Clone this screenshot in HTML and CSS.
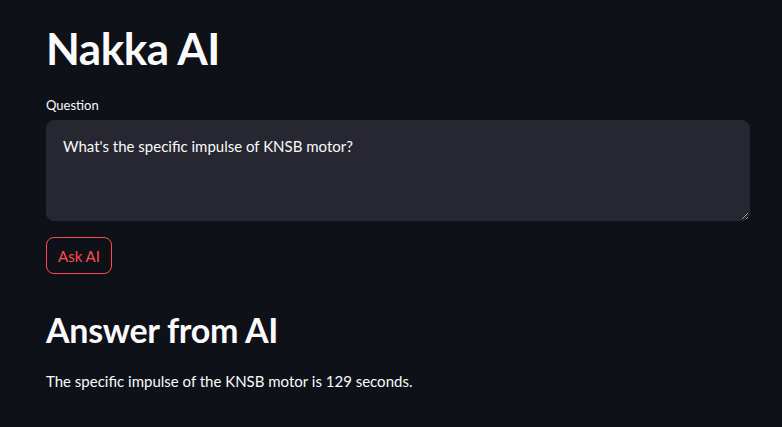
FILE: index.html
```html
<!DOCTYPE html>
<html>
<head>
<meta charset="utf-8">
<link rel="stylesheet" href="styles.css">
</head>
<body>
<main class="app">
  <h1 class="title">Nakka AI</h1>
  <label class="label" for="q">Question</label>
  <div class="field">
    <textarea id="q" class="input">What's the specific impulse of KNSB motor?</textarea>
  </div>
  <button class="btn">Ask AI</button>
  <h2 class="subtitle">Answer from AI</h2>
  <p class="answer">The specific impulse of the KNSB motor is 129 seconds.</p>
</main>
</body>
</html>
```
FILE: styles.css
```css
html, body {
  margin: 0;
  padding: 0;
  background: #0e1117;
  height: 100%;
  overflow: hidden;
}
body {
  font-family: "Lato", "Noto Sans", sans-serif;
  color: #fafafa;
}
.app {
  width: 704px;
  margin-left: 46px;
  display: flex;
  flex-direction: column;
  align-items: flex-start;
}
.title {
  margin: 20px 0 0;
  font-size: 44px;
  line-height: 56px;
  font-weight: 700;
  letter-spacing: -0.5px;
}
.label {
  margin-top: 20px;
  font-size: 13px;
  line-height: 18px;
}
.field {
  margin-top: 6px;
  width: 100%;
}
.input {
  display: block;
  box-sizing: border-box;
  width: 100%;
  height: 101px;
  background: #262730;
  border: 1px solid #262730;
  border-radius: 8px;
  color: #fafafa;
  font-family: inherit;
  font-size: 15px;
  line-height: 22px;
  padding: 14px 16px;
  resize: vertical;
  outline: none;
}
.btn {
  margin-top: 16px;
  height: 37px;
  padding: 0 11px;
  background: transparent;
  border: 1px solid #ff4b4b;
  border-radius: 8px;
  color: #ff4b4b;
  font-family: inherit;
  font-size: 15px;
}
.subtitle {
  margin: 34px 0 0;
  font-size: 34px;
  line-height: 44px;
  font-weight: 700;
  letter-spacing: -0.3px;
}
.answer {
  margin: 18px 0 0;
  font-size: 15px;
  line-height: 22px;
}
```
